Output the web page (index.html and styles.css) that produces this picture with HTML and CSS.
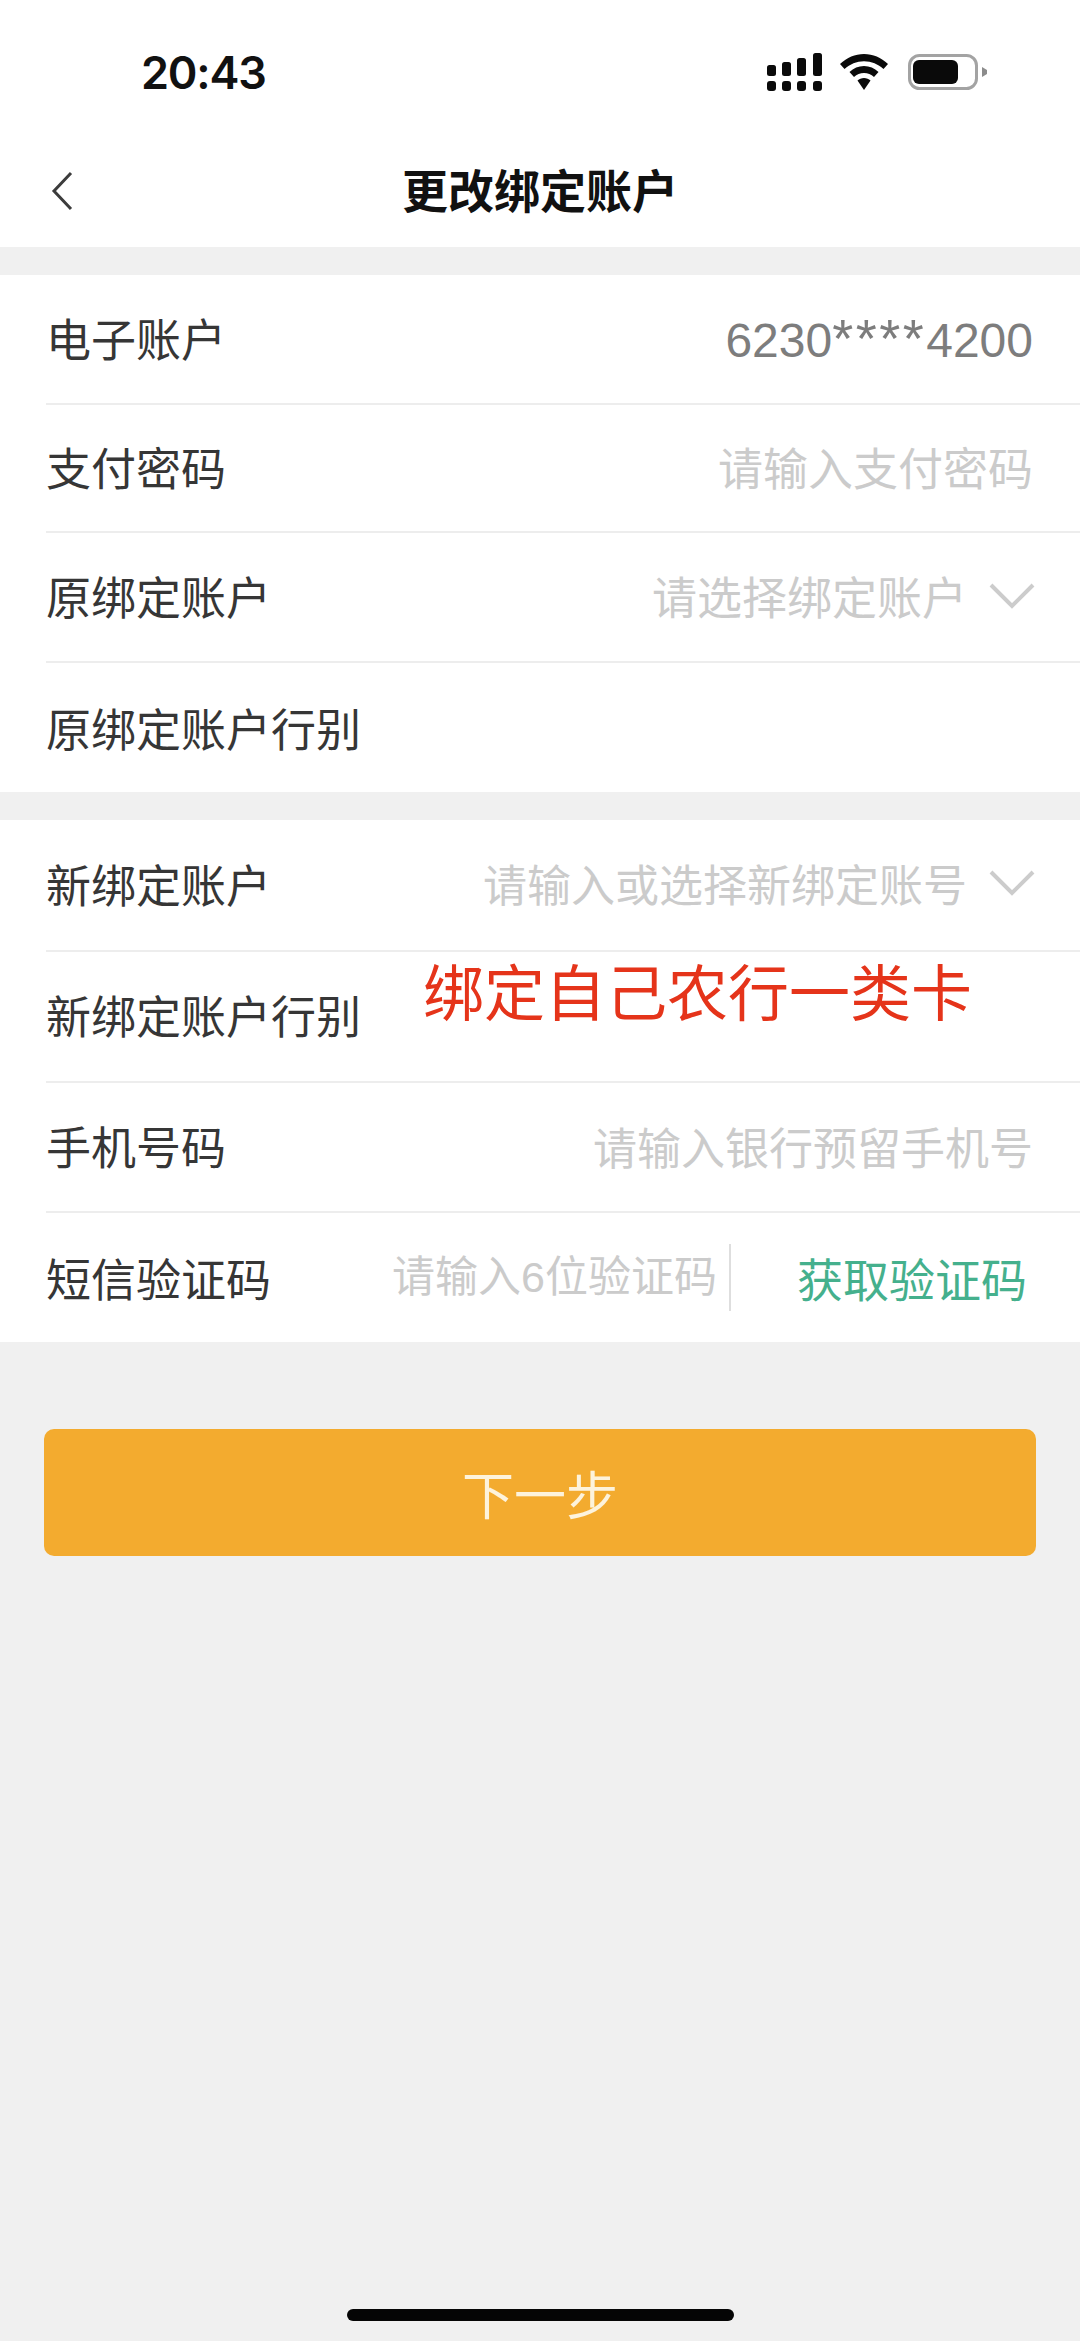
FILE: index.html
```html
<!DOCTYPE html>
<html>
  <head>
    <title>更改绑定账户</title>
    <meta charset="UTF-8">
    <meta name="viewport" content="width=device-width, initial-scale=1.0">
    <link rel="stylesheet" href="styles.css">
  </head>

  <body>
    <div class="status-bar">
      <span class="time">20:43</span>
      <div class="status-icons">
        <svg class="signal" width="55" height="38" viewBox="0 0 55 38">
          <rect x="0" y="12" width="9" height="11" rx="2.5"/>
          <rect x="15" y="9" width="9" height="14" rx="2.5"/>
          <rect x="30" y="5" width="9" height="18" rx="2.5"/>
          <rect x="46" y="0" width="9" height="23" rx="2.5"/>
          <rect x="0" y="28" width="9" height="10" rx="3"/>
          <rect x="15" y="28" width="9" height="10" rx="3"/>
          <rect x="30" y="28" width="9" height="10" rx="3"/>
          <rect x="46" y="28" width="9" height="10" rx="3"/>
        </svg>
        <svg class="wifi" width="48" height="36" viewBox="0 0 48 36">
          <path d="M24 0C15 0 7 3.500 0 10L4.500 15C10 10 16.500 7.200 24 7.200S38 10 43.500 15L48 10C41 3.500 33 0 24 0Z"/>
          <path d="M24 12C18.500 12 13.500 14 9.500 18L14 23C16.800 20.300 20.200 19 24 19S31.200 20.300 34 23L38.500 18C34.500 14 29.500 12 24 12Z"/>
          <path d="M24 24C21.500 24 19.200 25 17.500 26.600L24 36L30.500 26.600C28.800 25 26.500 24 24 24Z"/>
        </svg>
        <svg class="battery" width="80" height="36" viewBox="0 0 80 36">
          <rect x="1.500" y="1.500" width="67" height="33" rx="10" fill="none" stroke="#a3a3a3" stroke-width="3"/>
          <rect x="5" y="6" width="45" height="24" rx="6"/>
          <path d="M74 13L79 16V20L74 23Z" fill="#8c8c8c"/>
        </svg>
      </div>
    </div>

    <div class="nav">
      <svg class="back" width="22" height="40" viewBox="0 0 22 40">
        <path d="M20 2L3 20L20 38" fill="none" stroke="#3c3c3c" stroke-width="3"/>
      </svg>
      <h1 class="title">更改绑定账户</h1>
    </div>

    <div class="group">
      <div class="row">
        <span class="label">电子账户</span>
        <span class="value">6230<span class="stars">****</span>4200</span>
      </div>
      <div class="row row-short">
        <span class="label">支付密码</span>
        <span class="hint hint-wide">请输入支付密码</span>
      </div>
      <div class="row">
        <span class="label">原绑定账户</span>
        <span class="hint hint-wide">请选择绑定账户</span>
        <svg class="arrow" width="46" height="26" viewBox="0 0 46 26">
          <path d="M2 2L23 23L44 2" fill="none" stroke="#cccccc" stroke-width="4"/>
        </svg>
      </div>
      <div class="row">
        <span class="label">原绑定账户行别</span>
      </div>
    </div>

    <div class="group">
      <div class="row row-tall">
        <span class="label">新绑定账户</span>
        <span class="hint">请输入或选择新绑定账号</span>
        <svg class="arrow" width="46" height="26" viewBox="0 0 46 26">
          <path d="M2 2L23 23L44 2" fill="none" stroke="#cccccc" stroke-width="4"/>
        </svg>
      </div>
      <div class="row row-tall">
        <span class="label">新绑定账户行别</span>
        <span class="note">绑定自己农行一类卡</span>
      </div>
      <div class="row">
        <span class="label">手机号码</span>
        <span class="hint">请输入银行预留手机号</span>
      </div>
      <div class="row">
        <span class="label">短信验证码</span>
        <span class="hint hint-code">请输入6位验证码</span>
        <span class="code-link">获取验证码</span>
      </div>
    </div>

    <div class="next">下一步</div>

    <div class="home-bar"></div>
  </body>
</html>
```

FILE: styles.css
```css
html { height: 100%; }
body {
  margin: 0;
  min-height: 2341px;
  display: flex;
  flex-direction: column;
  background: #f0f0f0;
  font-family: "Liberation Sans", "Noto Sans CJK SC", sans-serif;
  color: #333;
}
.status-bar {
  height: 144px;
  background: white;
  display: flex;
  align-items: center;
  justify-content: space-between;
  padding: 0 92px 0 141px;
}
.time {
  font-family: "Inter", sans-serif;
  font-size: 45px;
  font-weight: 600;
  letter-spacing: -1.2px;
  color: #111;
}
.status-icons {
  display: flex;
  align-items: center;
  gap: 18px;
}
.status-icons svg { fill: #0a0a0a; }
.battery { margin-left: 2px; }
.nav {
  position: relative;
  height: 103px;
  background: white;
  display: flex;
  align-items: center;
  justify-content: center;
  padding-bottom: 15px;
  box-sizing: border-box;
  margin-bottom: 28px;
}
.back {
  position: absolute;
  left: 51px;
  top: 27px;
}
.title {
  margin: 0;
  font-size: 46px;
  font-weight: 700;
  color: #111;
}
.group {
  background: white;
  padding-left: 46px;
}
.group + .group { margin-top: 28px; }
.row {
  position: relative;
  height: 130px;
  display: flex;
  align-items: center;
  padding: 0 47px 3px 0;
  border-bottom: 2px solid #ededed;
  box-sizing: border-box;
}
.row-short { height: 128px; }
.row-tall { height: 131.5px; }
.row:last-child {
  height: 129px;
  padding-bottom: 1px;
  border-bottom: none;
}
.label {
  font-size: 45px;
  color: #363636;
}
.value {
  margin-left: auto;
  font-size: 48px;
  color: #7d7d7d;
}
.stars {
  font-size: 54px;
  letter-spacing: 2.5px;
}
.hint {
  margin-left: auto;
  font-size: 44px;
  color: #cbcbcb;
}
.hint-wide { font-size: 45px; }
.arrow {
  margin-left: 22px;
  margin-right: -2px;
}
.note {
  position: absolute;
  left: 377px;
  top: -7px;
  font-size: 61px;
  color: #e5341a;
}
.hint-code {
  font-size: 43px;
  padding-right: 12px;
  border-right: 2px solid #dedede;
  line-height: 67px;
}
.code-link {
  margin: 0 6px 0 66px;
  font-size: 46px;
  color: #45b08d;
}
.next {
  margin: 87px 44px 0;
  height: 127px;
  background: #f3ab2f;
  border-radius: 10px;
  display: flex;
  align-items: center;
  justify-content: center;
  font-size: 52px;
  color: #fdf3dc;
}
.home-bar {
  width: 387px;
  height: 12px;
  margin: auto auto 20px;
  border-radius: 6px;
  background: #050505;
}
```
